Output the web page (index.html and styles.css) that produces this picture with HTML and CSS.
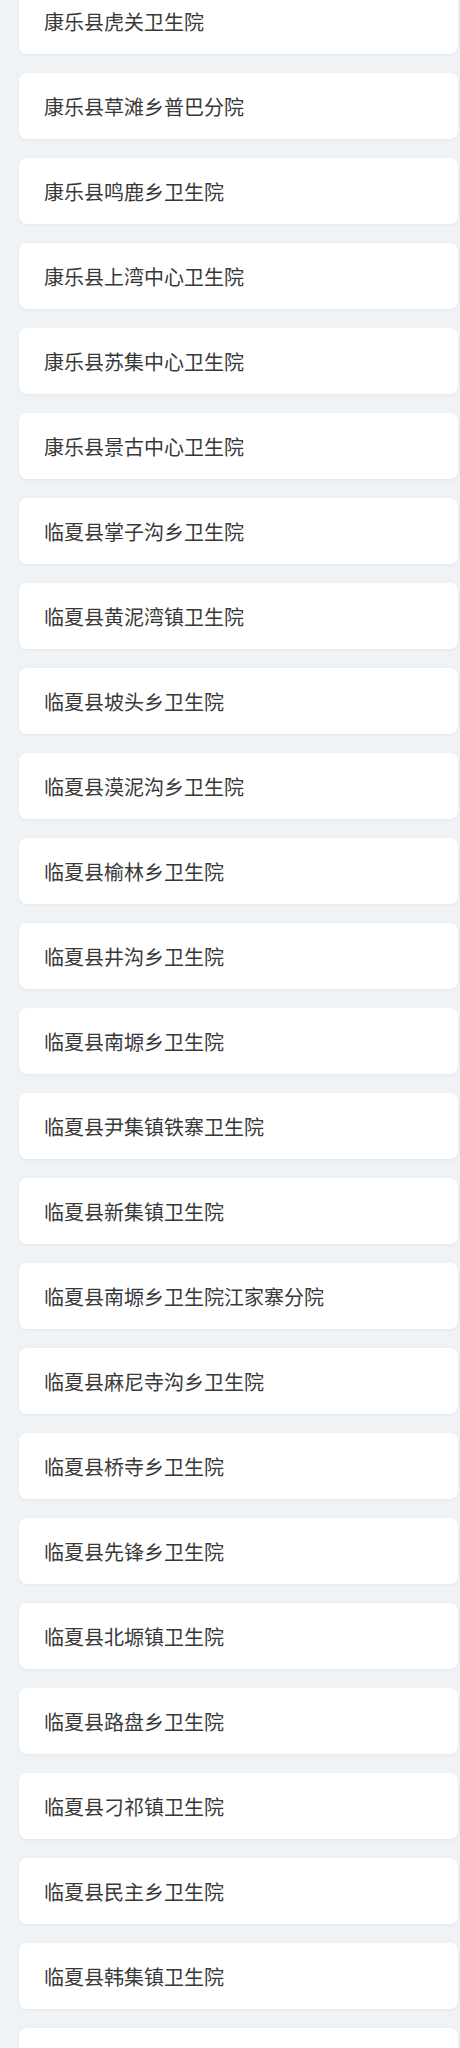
FILE: index.html
```html
<!DOCTYPE html>
<html lang="zh">
<head>
<meta charset="utf-8">
<link rel="stylesheet" href="styles.css">
</head>
<body>
<ul class="list">
<li class="card">康乐县虎关卫生院</li>
<li class="card">康乐县草滩乡普巴分院</li>
<li class="card">康乐县鸣鹿乡卫生院</li>
<li class="card">康乐县上湾中心卫生院</li>
<li class="card">康乐县苏集中心卫生院</li>
<li class="card">康乐县景古中心卫生院</li>
<li class="card">临夏县掌子沟乡卫生院</li>
<li class="card">临夏县黄泥湾镇卫生院</li>
<li class="card">临夏县坡头乡卫生院</li>
<li class="card">临夏县漠泥沟乡卫生院</li>
<li class="card">临夏县榆林乡卫生院</li>
<li class="card">临夏县井沟乡卫生院</li>
<li class="card">临夏县南塬乡卫生院</li>
<li class="card">临夏县尹集镇铁寨卫生院</li>
<li class="card">临夏县新集镇卫生院</li>
<li class="card">临夏县南塬乡卫生院江家寨分院</li>
<li class="card">临夏县麻尼寺沟乡卫生院</li>
<li class="card">临夏县桥寺乡卫生院</li>
<li class="card">临夏县先锋乡卫生院</li>
<li class="card">临夏县北塬镇卫生院</li>
<li class="card">临夏县路盘乡卫生院</li>
<li class="card">临夏县刁祁镇卫生院</li>
<li class="card">临夏县民主乡卫生院</li>
<li class="card">临夏县韩集镇卫生院</li>
<li class="card"></li>
</ul>
</body>
</html>
```

FILE: styles.css
```css
html, body {
  margin: 0;
  padding: 0;
  background: #eff3f6;
  overflow: hidden;
}
.list {
  list-style: none;
  margin: -12px 0 0 0;
  padding: 0 2px 0 19px;
  display: flex;
  flex-direction: column;
  gap: 19px;
}
.card {
  height: 66px;
  flex: none;
  box-sizing: border-box;
  background: #ffffff;
  border-radius: 8px;
  box-shadow: 0 1px 3px rgba(120, 140, 160, 0.12);
  padding-left: 25px;
  display: flex;
  align-items: center;
  font-family: "Noto Sans CJK SC", "Noto Sans", sans-serif;
  font-size: 20px;
  font-weight: 400;
  color: #383838;
}
```
